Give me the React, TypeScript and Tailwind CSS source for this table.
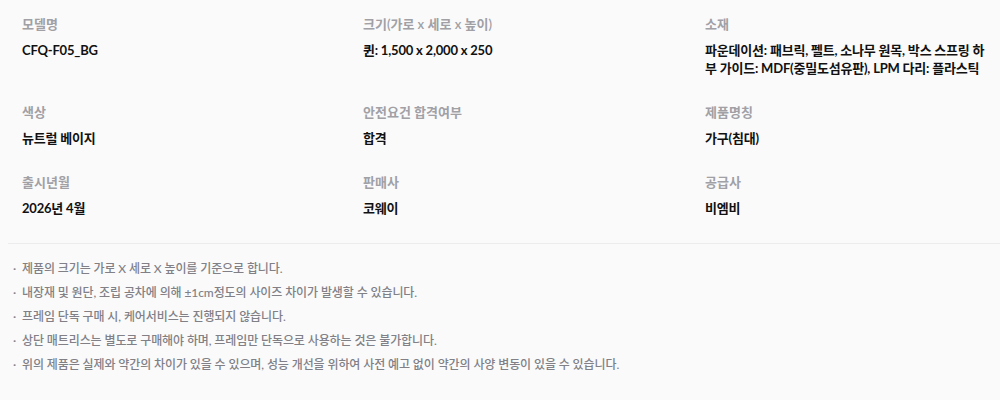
import React from "react";

const items = [
  { label: "모델명", value: "CFQ-F05_BG" },
  { label: "크기(가로 x 세로 x 높이)", value: "퀸: 1,500 x 2,000 x 250" },
  {
    label: "소재",
    value:
      "파운데이션: 패브릭, 펠트, 소나무 원목, 박스 스프링 하부 가이드: MDF(중밀도섬유판), LPM 다리: 플라스틱",
  },
  { label: "색상", value: "뉴트럴 베이지" },
  { label: "안전요건 합격여부", value: "합격" },
  { label: "제품명칭", value: "가구(침대)" },
  { label: "출시년월", value: "2026년 4월" },
  { label: "판매사", value: "코웨이" },
  { label: "공급사", value: "비엠비" },
];

const notes = [
  "제품의 크기는 가로 X 세로 X 높이를 기준으로 합니다.",
  "내장재 및 원단, 조립 공차에 의해 ±1cm정도의 사이즈 차이가 발생할 수 있습니다.",
  "프레임 단독 구매 시, 케어서비스는 진행되지 않습니다.",
  "상단 매트리스는 별도로 구매해야 하며, 프레임만 단독으로 사용하는 것은 불가합니다.",
  "위의 제품은 실제와 약간의 차이가 있을 수 있으며, 성능 개선을 위하여 사전 예고 없이 약간의 사양 변동이 있을 수 있습니다.",
];

export default function App() {
  return (
    <div
      className="w-[1000px] h-[400px] bg-[#fafafb] overflow-hidden"
      style={{ fontFamily: "Lato, 'Noto Sans CJK KR', sans-serif" }}
    >
      <div className="pl-[8px]">
        <div className="grid grid-cols-[341px_342px_1fr] pl-[14px] pr-[10px] pt-[14px] pb-[26px] border-b border-[#ececee]">
          {items.map((it) => (
            <div key={it.label} className="flex flex-col pb-[25px] [&:nth-child(n+7)]:pb-0">
              <div className="text-[13px] leading-[20px] font-semibold text-[#a0a0a5]">
                {it.label}
              </div>
              <div className="mt-[7px] text-[13px] leading-[18px] font-bold text-[#111111] tracking-[-0.2px]">
                {it.value}
              </div>
            </div>
          ))}
        </div>
        <ul className="pt-[13px] pl-[5px]">
          {notes.map((n) => (
            <li key={n} className="flex text-[12px] leading-[24px] font-medium text-[#808086] tracking-[-0.1px]">
              <span className="w-[9px] shrink-0">·</span>
              <span>{n}</span>
            </li>
          ))}
        </ul>
      </div>
    </div>
  );
}
